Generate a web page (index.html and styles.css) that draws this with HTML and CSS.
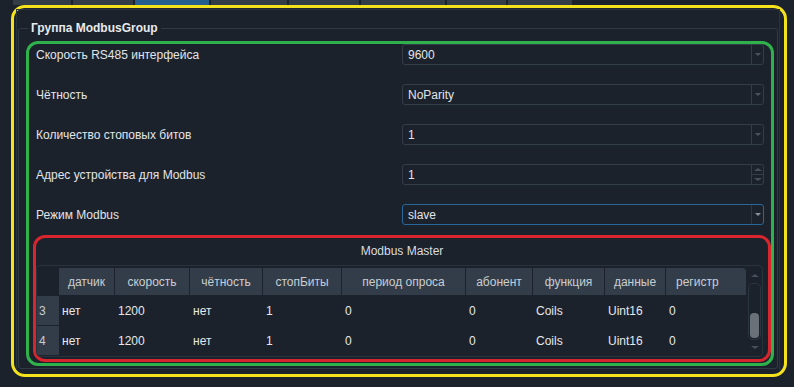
FILE: index.html
```html
<!DOCTYPE html>
<html lang="ru">
<head>
  <meta charset="UTF-8">
  <title>Modbus</title>
  <link rel="stylesheet" href="styles.css">
</head>
<body>
  <div class="tabs">
    <span class="tab" style="width:58px"></span>
    <span class="tab" style="width:60px"></span>
    <span class="tab active" style="width:74px"></span>
    <span class="tab" style="width:76px"></span>
    <span class="tab" style="width:70px"></span>
    <span class="tab" style="width:84px"></span>
    <span class="tab" style="width:59px"></span>
    <span class="tab" style="width:64px"></span>
  </div>

  <div class="mark-yellow">
    <div class="pane">
      <fieldset class="group">
        <legend>Группа ModbusGroup</legend>

        <div class="mark-green">
          <div class="form">
            <div class="label">Скорость RS485 интерфейса</div>
            <div class="combo"><span>9600</span><i class="drop"></i></div>

            <div class="label">Чётность</div>
            <div class="combo"><span>NoParity</span><i class="drop"></i></div>

            <div class="label">Количество стоповых битов</div>
            <div class="combo"><span>1</span><i class="drop"></i></div>

            <div class="label">Адрес устройства для Modbus</div>
            <div class="combo spin"><span>1</span><i class="updown"><b class="up"></b><b class="down"></b></i></div>

            <div class="label">Режим Modbus</div>
            <div class="combo focus"><span>slave</span><i class="drop"></i></div>
          </div>

          <div class="mark-red">
            <div class="table-title">Modbus Master</div>
            <div class="table-frame">
              <table class="grid">
                <colgroup>
                  <col style="width:22px"><col style="width:56px"><col style="width:75px"><col style="width:73px">
                  <col style="width:79px"><col style="width:124px"><col style="width:67px"><col style="width:72px">
                  <col style="width:61px"><col style="width:80px">
                </colgroup>
                <thead>
                  <tr>
                    <th class="corner"></th>
                    <th>датчик</th><th>скорость</th><th>чётность</th><th>стопБиты</th>
                    <th>период опроса</th><th>абонент</th><th>функция</th><th>данные</th><th class="last">регистр</th>
                  </tr>
                </thead>
                <tbody>
                  <tr>
                    <th class="num">3</th>
                    <td>нет</td><td>1200</td><td>нет</td><td>1</td><td>0</td><td>0</td><td>Coils</td><td>Uint16</td><td>0</td>
                  </tr>
                  <tr>
                    <th class="num">4</th>
                    <td>нет</td><td>1200</td><td>нет</td><td>1</td><td>0</td><td>0</td><td>Coils</td><td>Uint16</td><td>0</td>
                  </tr>
                </tbody>
              </table>
              <div class="scrollbar">
                <b class="up"></b>
                <div class="track"><div class="handle"></div></div>
                <b class="down"></b>
              </div>
            </div>
          </div>
        </div>
      </fieldset>
    </div>
  </div>
</body>
</html>
```

FILE: styles.css
```css
body {
  margin: 0;
  background: #1b222c;
  color: #e2e5e8;
  font-family: "Liberation Sans", Arial, sans-serif;
  font-size: 12px;
}
.tabs {
  display: flex;
  gap: 2px;
  height: 5px;
  padding-left: 13px;
}
.tab {
  display: block;
  height: 5px;
  background: #323d48;
}
.tab.active {
  background: #245e8e;
}

/* annotation frames */
.mark-yellow {
  margin: 0 7px 0 11px;
  border: 3px solid #f4e31c;
  border-radius: 14px;
  padding-bottom: 4px;
}
.mark-green {
  border: 3px solid #2fb14c;
  border-radius: 12px;
  padding-bottom: 1px;
}
.mark-red {
  margin: 10px 0 0 4px;
  border: 3px solid #d9262e;
  border-radius: 12px;
  padding-bottom: 2px;
}

.pane {
  margin: 1px 4px 0 2px;
  border: 1px solid #29333e;
  border-bottom: none;
  padding-bottom: 1px;
}
.group {
  margin: 11px 1px 0 1px;
  padding: 6px 3px 2px 7px;
  border: 1px solid #2f3a45;
  border-radius: 3px;
  min-width: 0;
}
.group legend {
  font-weight: bold;
  line-height: 14px;
  padding: 0 3px;
  margin-left: 2px;
  color: #e8eaec;
}

.form {
  display: grid;
  grid-template-columns: 1fr 362px;
  row-gap: 19px;
  align-items: center;
  padding: 0 7px;
}
.label {
  color: #e2e5e8;
}
.combo {
  height: 21px;
  box-sizing: border-box;
  border: 1px solid #333e49;
  border-radius: 3px;
  display: flex;
  align-items: center;
  padding-left: 5px;
}
.combo.focus {
  border-color: #2a679a;
}
.combo span {
  flex: 1;
}
.combo i {
  align-self: stretch;
  width: 11px;
  border-left: 1px solid #333e49;
  display: flex;
  flex-direction: column;
  align-items: center;
  justify-content: center;
}
.combo.focus i {
  border-left-color: #2d3844;
}
.drop::after {
  content: "";
  border-left: 3px solid transparent;
  border-right: 3px solid transparent;
  border-top: 3px solid #4a5560;
}
.combo.focus .drop::after {
  border-top-color: #8a939c;
}
.updown b {
  flex: 1;
  align-self: stretch;
  display: flex;
  align-items: center;
  justify-content: center;
}
.updown .up {
  border-bottom: 1px solid #333e49;
}
.updown .up::after,
.scrollbar .up::after {
  content: "";
  border-left: 4px solid transparent;
  border-right: 4px solid transparent;
  border-bottom: 3px solid #46515c;
}
.updown .down::after,
.scrollbar .down::after {
  content: "";
  border-left: 4px solid transparent;
  border-right: 4px solid transparent;
  border-top: 3px solid #46515c;
}

.table-title {
  height: 27px;
  line-height: 27px;
  text-align: center;
  color: #d8dce0;
}
.table-frame {
  display: flex;
  margin-right: 5px;
  border: 1px solid #29333e;
  border-radius: 4px;
  padding-top: 1px;
}
.grid {
  width: 709px;
  table-layout: fixed;
  border-collapse: separate;
  border-spacing: 0 1px;
}
.grid th,
.grid td {
  padding: 0;
  font-weight: normal;
  white-space: nowrap;
}
.grid thead th {
  height: 27px;
  background: #323d49;
  color: #c9ced3;
  text-align: center;
  border-right: 1px solid #1b222c;
}
.grid thead th.corner {
  background: transparent;
}
.grid thead th.last {
  border-right: none;
  border-top-right-radius: 4px;
  text-align: left;
  padding-left: 10px;
}
.grid td {
  height: 29px;
  padding-left: 3px;
  color: #e6e8ea;
}
.grid th.num {
  background: #323d49;
  color: #c9ced3;
  text-align: left;
  padding-left: 2px;
}
.scrollbar {
  width: 13px;
  margin: 1px 0 1px 2px;
  display: flex;
  flex-direction: column;
  align-items: center;
}
.scrollbar b {
  height: 15px;
  display: flex;
  align-items: center;
  justify-content: center;
}
.track {
  flex: 1;
  width: 13px;
  box-sizing: border-box;
  border: 1px solid #2b3540;
  border-radius: 5px;
  display: flex;
  flex-direction: column;
  align-items: center;
  justify-content: flex-end;
  padding-bottom: 1px;
}
.handle {
  width: 9px;
  height: 25px;
  border-radius: 4px;
  background: #6b7179;
}
```
